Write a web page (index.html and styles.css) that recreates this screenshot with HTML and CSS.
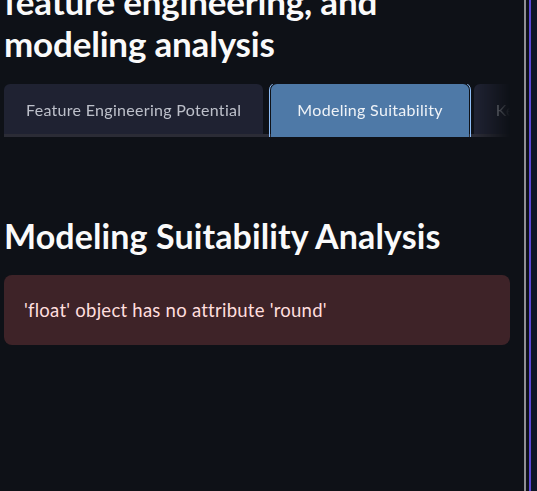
FILE: index.html
```html
<!DOCTYPE html>
<html lang="en">
<head>
<meta charset="utf-8">
<title>Modeling Suitability</title>
<link rel="stylesheet" href="styles.css">
</head>
<body>
<div class="frame">
  <main class="app">
    <h1 class="title">feature engineering, and<br>modeling analysis</h1>
    <div class="tablist">
      <button class="tab">Feature Engineering Potential</button>
      <button class="tab active">Modeling Suitability</button>
      <button class="tab">Key Insights</button>
    </div>
    <h2 class="section">Modeling Suitability Analysis</h2>
    <div class="alert">'float' object has no attribute 'round'</div>
  </main>
  <div class="scroll-line"></div>
  <div class="gutter"></div>
  <div class="edge-line"></div>
  <div class="outside"></div>
</div>
</body>
</html>
```

FILE: styles.css
```css
html, body {
  margin: 0;
  padding: 0;
  height: 100%;
  background: #0e1117;
  overflow: hidden;
}

.frame {
  display: flex;
  height: 491px;
  width: 537px;
}

.app {
  width: 506px;
  padding: 0 14px 0 4px;
  flex-shrink: 0;
  font-family: Lato, "Liberation Sans", sans-serif;
  color: #fafafa;
}

.title {
  margin: -20px 0 0 0;
  font-size: 35px;
  line-height: 42px;
  font-weight: 700;
  letter-spacing: -0.2px;
}

.tablist {
  margin-top: 20px;
  display: flex;
  gap: 5px;
  height: 53px;
  overflow: hidden;
  box-shadow: inset 0 -3px 0 #2b2c36;
  -webkit-mask-image: linear-gradient(to right, #000 calc(100% - 34px), transparent);
  mask-image: linear-gradient(to right, #000 calc(100% - 34px), transparent);
}

.tab {
  flex-shrink: 0;
  height: 50px;
  padding: 0 22px;
  border: none;
  border-radius: 6px 6px 0 0;
  background: #1f2232;
  color: #bdc0ca;
  font-family: Lato, "Liberation Sans", sans-serif;
  font-size: 16px;
  letter-spacing: 0.3px;
}

.tab.active {
  height: 53px;
  margin-left: 3px;
  padding: 0 26px 3px;
  background: #4e79a7;
  color: #eef2f7;
  outline: 1px solid #8dbcf6;
  outline-offset: 1px;
}

.section {
  margin: 78px 0 0 0;
  font-size: 34px;
  line-height: 42px;
  font-weight: 700;
  letter-spacing: 0.1px;
}

.alert {
  margin-top: 18px;
  padding: 21px 20px;
  border-radius: 8px;
  background: #3e2328;
  color: #ffdede;
  font-size: 18.5px;
  line-height: 28px;
  letter-spacing: 0.25px;
}

.scroll-line {
  width: 2px;
  flex-shrink: 0;
  background: #8f8f94;
}

.gutter {
  width: 3px;
  flex-shrink: 0;
  background: #0e1117;
}

.edge-line {
  width: 2px;
  flex-shrink: 0;
  background: #5b48d6;
}

.outside {
  flex: 1;
  background: #0f1527;
}
```
